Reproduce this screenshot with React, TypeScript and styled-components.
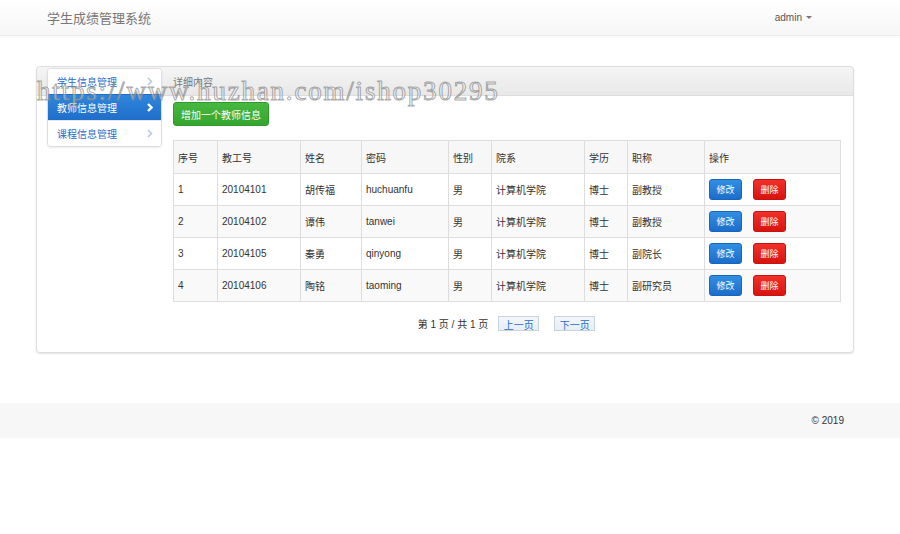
import React from 'react';
import styled, { createGlobalStyle } from 'styled-components';

const GlobalStyle = createGlobalStyle`
  body {
    margin: 0;
    background: #fff;
    font-family: "Liberation Sans", Arial, "Noto Sans CJK SC", sans-serif;
    color: #333;
  }
`;

const Page = styled.div`
  position: relative;
  width: 900px;
  min-height: 534px;
`;

const Navbar = styled.div`
  height: 35px;
  display: flex;
  align-items: center;
  justify-content: space-between;
  padding: 0 88px 0 47px;
  background: linear-gradient(#ffffff, #f6f6f6);
  border-bottom: 1px solid #ececec;
  box-shadow: 0 1px 3px rgba(0, 0, 0, 0.04);
`;

const Brand = styled.div`
  font-size: 13px;
  color: #777;
`;

const UserMenu = styled.div`
  display: flex;
  align-items: center;
  gap: 4px;
  font-size: 10px;
  color: #555;
`;

const Caret = styled.span`
  width: 0;
  height: 0;
  border-left: 3px solid transparent;
  border-right: 3px solid transparent;
  border-top: 3px solid #777;
`;

const Main = styled.div`
  padding: 30px 46px 0 36px;
`;

const Panel = styled.div`
  height: 284px;
  border: 1px solid #dddddd;
  border-radius: 4px;
  box-shadow: 0 1px 2px rgba(0, 0, 0, 0.1);
  background:
    linear-gradient(#dddddd, #dddddd) 0 28px / 100% 1px no-repeat,
    linear-gradient(#f5f5f5, #e8e8e8) 0 0 / 100% 28px no-repeat,
    #fff;
  display: flex;
  gap: 11px;
  padding: 1px 13px 0 10px;
`;

const Sidebar = styled.div`
  width: 113px;
  flex-shrink: 0;
  align-self: flex-start;
  background: #fff;
  border: 1px solid #dddddd;
  border-radius: 4px;
  box-shadow: 0 1px 2px rgba(0, 0, 0, 0.08);
  overflow: hidden;
`;

const SideItem = styled.div<{ active?: boolean }>`
  height: 25px;
  display: flex;
  align-items: center;
  justify-content: space-between;
  padding: 0 8px 0 9px;
  font-size: 10px;
  color: ${p => (p.active ? '#fff' : '#2a6bc6')};
  background: ${p => (p.active ? 'linear-gradient(#2f86dc, #1f6ec9)' : '#fff')};
  border-top: 1px solid ${p => (p.active ? '#1f6ec9' : '#e6e6e6')};
  &:first-child {
    border-top: none;
  }
`;

const Chevron = styled.svg<{ active?: boolean }>`
  width: 6px;
  height: 9px;
  stroke: ${p => (p.active ? '#fff' : '#b8c9e2')};
  stroke-width: ${p => (p.active ? 2.4 : 1.6)};
  fill: none;
`;

const Content = styled.div`
  flex: 1;
  min-width: 0;
  display: flex;
  flex-direction: column;
`;

const HeadingText = styled.div`
  height: 25px;
  display: flex;
  align-items: center;
  font-size: 10px;
  color: #777;
  padding-top: 1px;
`;

const AddButton = styled.button`
  align-self: flex-start;
  margin-top: 8px;
  width: 96px;
  height: 24px;
  border: 1px solid #2f9a2c;
  border-radius: 3px;
  background: linear-gradient(#46b83f, #35a52f);
  color: #fff;
  font-family: inherit;
  font-size: 10px;
  padding: 0;
`;

const Table = styled.table`
  margin-top: 14px;
  width: 667px;
  table-layout: fixed;
  border-collapse: collapse;
  border: 1px solid #dddddd;
  font-size: 10px;
  color: #333;
`;

const Th = styled.th<{ w: number }>`
  box-sizing: border-box;
  width: ${p => p.w}px;
  height: 33px;
  text-align: left;
  font-weight: normal;
  padding: 0 4px;
  border: 1px solid #dddddd;
  background: #f7f7f7;
`;

const Tr = styled.tr<{ striped?: boolean }>`
  background: ${p => (p.striped ? '#f9f9f9' : '#fff')};
`;

const Td = styled.td`
  height: 31px;
  padding: 0 4px;
  border: 1px solid #dddddd;
  white-space: nowrap;
`;

const Actions = styled.div`
  display: flex;
  gap: 11px;
`;

const SmallButton = styled.button<{ variant: 'edit' | 'del' }>`
  width: 33px;
  height: 21px;
  padding: 0;
  border-radius: 3px;
  font-family: inherit;
  font-size: 9px;
  color: #fff;
  border: 1px solid ${p => (p.variant === 'edit' ? '#1b64bd' : '#c8140f')};
  background: ${p =>
    p.variant === 'edit'
      ? 'linear-gradient(#318fe3, #1c6dcb)'
      : 'linear-gradient(#f0302a, #d9140f)'};
`;

const Pager = styled.div`
  margin-top: 14px;
  display: flex;
  justify-content: center;
  align-items: center;
  font-size: 10px;
  color: #333;
`;

const PagerButton = styled.button`
  margin-left: 10px;
  width: 41px;
  height: 15px;
  padding: 0;
  border: 1px solid #c9d3dc;
  background: linear-gradient(#f3f7fb, #e6eef6);
  color: #2a6bc6;
  font-family: inherit;
  font-size: 10px;
  & + & {
    margin-left: 15px;
  }
`;

const Footer = styled.div`
  margin-top: 50px;
  height: 35px;
  background: #f7f7f7;
  display: flex;
  align-items: center;
  justify-content: flex-end;
  padding-right: 56px;
  font-size: 10px;
  color: #333;
`;

const Watermark = styled.div`
  position: absolute;
  left: 37px;
  top: 76px;
  font-family: "Liberation Serif", "Times New Roman", serif;
  font-size: 27px;
  letter-spacing: 1.8px;
  color: rgba(255, 255, 255, 0.4);
  -webkit-text-stroke: 1px rgba(130, 130, 130, 0.7);
  pointer-events: none;
  white-space: nowrap;
`;

const columns = [
  { title: '序号', w: 44 },
  { title: '教工号', w: 83 },
  { title: '姓名', w: 61 },
  { title: '密码', w: 87 },
  { title: '性别', w: 43 },
  { title: '院系', w: 93 },
  { title: '学历', w: 43 },
  { title: '职称', w: 77 },
  { title: '操作', w: 136 },
];

const teachers = [
  { id: '20104101', name: '胡传福', pwd: 'huchuanfu', title: '副教授' },
  { id: '20104102', name: '谭伟', pwd: 'tanwei', title: '副教授' },
  { id: '20104105', name: '秦勇', pwd: 'qinyong', title: '副院长' },
  { id: '20104106', name: '陶铭', pwd: 'taoming', title: '副研究员' },
];

const menu = ['学生信息管理', '教师信息管理', '课程信息管理'];

const App = () => {
  return (
    <Page>
      <GlobalStyle />
      <Navbar>
        <Brand>学生成绩管理系统</Brand>
        <UserMenu>
          admin <Caret />
        </UserMenu>
      </Navbar>

      <Main>
        <Panel>
          <Sidebar>
            {menu.map((m, i) => (
              <SideItem key={m} active={i === 1}>
                {m}
                <Chevron active={i === 1} viewBox="0 0 6 9">
                  <path d="M1 1 L4.5 4.5 L1 8" />
                </Chevron>
              </SideItem>
            ))}
          </Sidebar>

          <Content>
            <HeadingText>详细内容</HeadingText>
            <AddButton>增加一个教师信息</AddButton>
            <Table>
              <thead>
                <tr>
                  {columns.map(c => (
                    <Th key={c.title} w={c.w}>{c.title}</Th>
                  ))}
                </tr>
              </thead>
              <tbody>
                {teachers.map((t, i) => (
                  <Tr key={t.id} striped={i % 2 === 1}>
                    <Td>{i + 1}</Td>
                    <Td>{t.id}</Td>
                    <Td>{t.name}</Td>
                    <Td>{t.pwd}</Td>
                    <Td>男</Td>
                    <Td>计算机学院</Td>
                    <Td>博士</Td>
                    <Td>{t.title}</Td>
                    <Td>
                      <Actions>
                        <SmallButton variant="edit">修改</SmallButton>
                        <SmallButton variant="del">删除</SmallButton>
                      </Actions>
                    </Td>
                  </Tr>
                ))}
              </tbody>
            </Table>
            <Pager>
              第 1 页 / 共 1 页
              <PagerButton>上一页</PagerButton>
              <PagerButton>下一页</PagerButton>
            </Pager>
          </Content>
        </Panel>
      </Main>

      <Footer>© 2019</Footer>

      <Watermark>https://www.huzhan.com/ishop30295</Watermark>
    </Page>
  );
};

export default App;
